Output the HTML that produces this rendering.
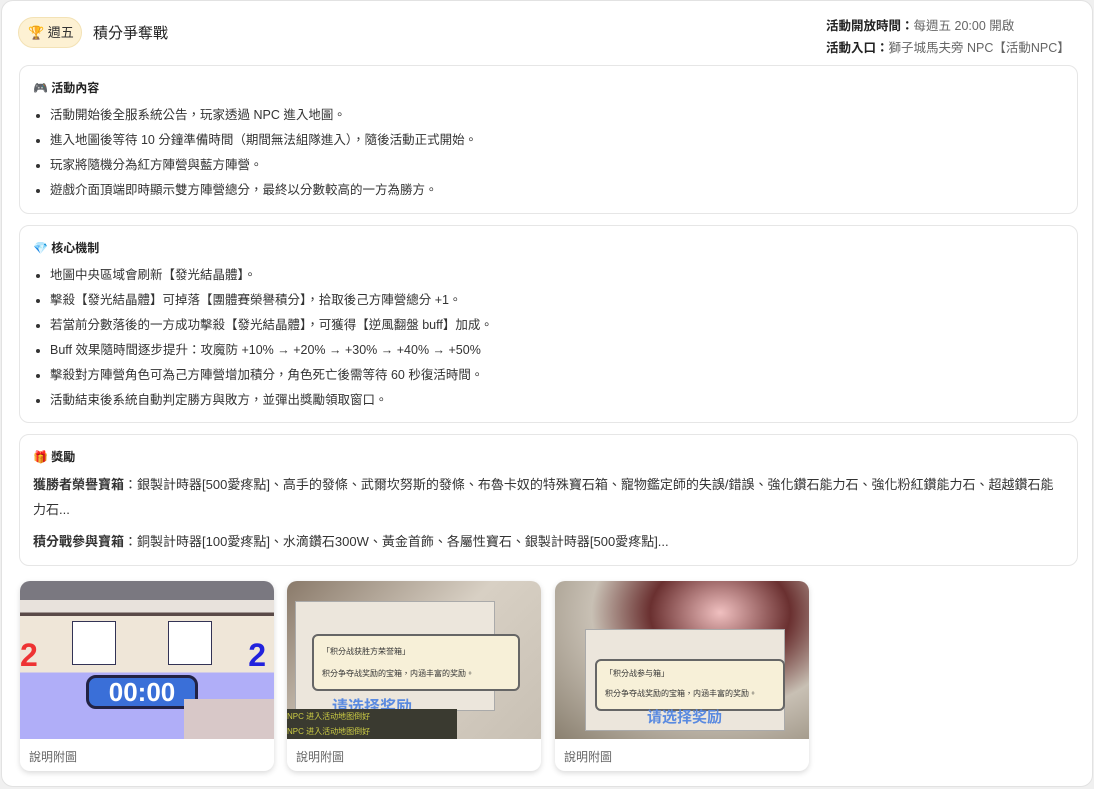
<!DOCTYPE html>
<html><head><meta charset="utf-8"><style>
*{box-sizing:border-box;margin:0;padding:0}
body{width:1094px;height:789px;background:#f0f0f0;font-family:"Liberation Sans","Noto Sans CJK TC",sans-serif;color:#333;overflow:hidden}
.outer{position:absolute;left:1px;top:0;width:1092px;height:787px;background:#fff;border:1px solid #e2e2e2;border-radius:12px}
.badge{position:absolute;left:16px;top:16px;width:64px;height:31px;border-radius:16px;background:#fdf1d3;border:1px solid #f3e2b5;font-size:13px;line-height:29px;padding-left:9px;color:#333}
.title{position:absolute;left:91px;top:21px;font-size:15px;color:#222}
.info{position:absolute;left:824px;top:14px;font-size:12.5px;line-height:22px;color:#666;text-align:left;white-space:nowrap}
.info b{color:#222}
.sec{position:absolute;left:17px;width:1059px;border:1px solid #e6e6e6;border-radius:10px;background:#fff}
.sec h3{font-size:12px;font-weight:bold;color:#222;margin:13px 0 0 13px;height:18px}
.sec ul{list-style:none;margin:6px 0 0 12px}
.sec li{font-size:12.5px;line-height:25px;color:#333;padding-left:18px;position:relative}
.sec li:before{content:"";position:absolute;left:4px;top:11px;width:4px;height:4px;border-radius:50%;background:#333}
.sec p{font-size:13px;line-height:25px;margin:0 13px 0 13px;color:#333}
.img{position:absolute;top:580px;width:254px;height:190px;border-radius:10px;background:#fff;box-shadow:0 2px 6px rgba(0,0,0,.15);overflow:hidden}
.img .pic{height:158px;position:relative;overflow:hidden}
.img .cap{font-size:12px;color:#666;margin:9px 0 0 9px}
</style></head><body>
<div class="outer">
<div class="badge">🏆 週五</div>
<div class="title">積分爭奪戰</div>
<div class="info"><b>活動開放時間：</b>每週五 20:00 開啟<br><b>活動入口：</b>獅子城馬夫旁 NPC【活動NPC】</div>

<div class="sec" style="top:64px;height:149px">
<h3>🎮 活動內容</h3>
<ul>
<li>活動開始後全服系統公告，玩家透過 NPC 進入地圖。</li>
<li>進入地圖後等待 10 分鐘準備時間（期間無法組隊進入），隨後活動正式開始。</li>
<li>玩家將隨機分為紅方陣營與藍方陣營。</li>
<li>遊戲介面頂端即時顯示雙方陣營總分，最終以分數較高的一方為勝方。</li>
</ul></div>

<div class="sec" style="top:224px;height:198px">
<h3>💎 核心機制</h3>
<ul>
<li>地圖中央區域會刷新【發光結晶體】。</li>
<li>擊殺【發光結晶體】可掉落【團體賽榮譽積分】，拾取後己方陣營總分 +1。</li>
<li>若當前分數落後的一方成功擊殺【發光結晶體】，可獲得【逆風翻盤 buff】加成。</li>
<li>Buff 效果隨時間逐步提升：攻魔防 +10% → +20% → +30% → +40% → +50%</li>
<li>擊殺對方陣營角色可為己方陣營增加積分，角色死亡後需等待 60 秒復活時間。</li>
<li>活動結束後系統自動判定勝方與敗方，並彈出獎勵領取窗口。</li>
</ul></div>

<div class="sec" style="top:433px;height:132px">
<h3>🎁 獎勵</h3>
<p style="margin-top:6px"><b>獲勝者榮譽寶箱</b>：銀製計時器[500愛疼點]、高手的發條、武爾坎努斯的發條、布魯卡奴的特殊寶石箱、寵物鑑定師的失誤/錯誤、強化鑽石能力石、強化粉紅鑽能力石、超越鑽石能力石...</p>
<p style="margin-top:7px"><b>積分戰參與寶箱</b>：銅製計時器[100愛疼點]、水滴鑽石300W、黃金首飾、各屬性寶石、銀製計時器[500愛疼點]...</p>
</div>

<div class="img" style="left:18px"><div class="pic" style="background:linear-gradient(#7a7880 0 12%,#e8e2dc 12% 20%,#5a4a48 20% 22%,#efe6d8 22% 58%,#b0aef8 58%)">
<div style="position:absolute;left:52px;top:40px;width:44px;height:44px;background:#fff;border:1px solid #335"></div>
<div style="position:absolute;left:148px;top:40px;width:44px;height:44px;background:#fff;border:1px solid #335"></div>
<div style="position:absolute;left:0;top:56px;color:#e33;font-size:32px;font-weight:bold">2</div>
<div style="position:absolute;right:8px;top:56px;color:#22d;font-size:32px;font-weight:bold">2</div>
<div style="position:absolute;left:66px;top:94px;width:112px;height:34px;border-radius:10px;background:#3a6fd8;border:3px solid #224;color:#fff;font-size:26px;font-weight:bold;text-align:center;line-height:28px">00:00</div>
<div style="position:absolute;right:0;bottom:0;width:90px;height:40px;background:#d8c8c8"></div>
</div><div class="cap">說明附圖</div></div>

<div class="img" style="left:285px"><div class="pic" style="background:linear-gradient(135deg,#8a7a6a,#d8d0c4 50%,#c8c0b4)">
<div style="position:absolute;left:8px;top:20px;width:200px;height:110px;background:#ece6dc;border:1px solid #aaa"></div>
<div style="position:absolute;left:25px;top:53px;width:208px;height:57px;background:#f7f0d8;border:2px solid #666;border-radius:6px;font-size:8px;padding:5px 8px;line-height:22px">「积分战获胜方荣誉箱」<br>积分争夺战奖励的宝箱，内涵丰富的奖励。</div>
<div style="position:absolute;left:45px;top:112px;color:#5a8ae0;font-size:16px;font-weight:bold">请选择奖励</div>
<div style="position:absolute;left:0;top:128px;width:170px;height:30px;background:#3a3a30;color:#cc4;font-size:8px;line-height:15px">NPC 进入活动地图倒好<br>NPC 进入活动地图倒好</div>
</div><div class="cap">說明附圖</div></div>

<div class="img" style="left:553px"><div class="pic" style="background:radial-gradient(ellipse at 65% 20%,#f0c0c0,#6a3030 30%,#c8c0b4 55%,#8a8070)">
<div style="position:absolute;left:30px;top:48px;width:200px;height:102px;background:#ece6dc;border:1px solid #aaa"></div>
<div style="position:absolute;left:40px;top:78px;width:190px;height:52px;background:#f7f0d8;border:2px solid #666;border-radius:6px;font-size:8px;padding:3px 8px;line-height:20px">「积分战参与箱」<br>积分争夺战奖励的宝箱，内涵丰富的奖励。</div>
<div style="position:absolute;left:92px;top:125px;color:#5a8ae0;font-size:15px;font-weight:bold">请选择奖励</div>
</div><div class="cap">說明附圖</div></div>
</div>
</body></html>
